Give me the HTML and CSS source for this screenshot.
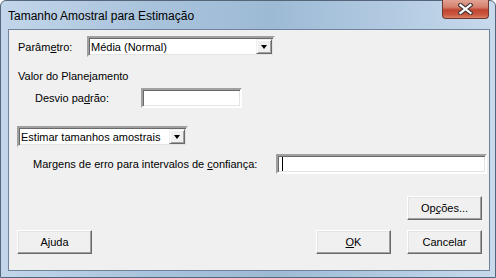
FILE: index.html
```html
<!DOCTYPE html>
<html lang="pt">
<head>
  <meta charset="UTF-8">
  <title>Tamanho Amostral para Estimação</title>
  <link rel="stylesheet" href="styles.css">
</head>
<body>
  <div class="window">
    <div class="titlebar">
      <span class="title">Tamanho Amostral para Estimação</span>
      <button class="close-btn">
        <svg width="15" height="12" viewBox="0 0 15 12">
          <path d="M2.5 2 L12.5 10 M12.5 2 L2.5 10" stroke="#4a3a3a" stroke-width="4.5" stroke-linecap="square"/>
          <path d="M2.5 2 L12.5 10 M12.5 2 L2.5 10" stroke="#ffffff" stroke-width="2.2" stroke-linecap="square"/>
        </svg>
      </button>
    </div>
    <div class="client">
      <div class="row row-param">
        <span class="label label-param">Parâm<u>e</u>tro:</span>
        <div class="combo combo-param">
          <span class="combo-text">Média (Normal)</span>
          <span class="combo-arrow"></span>
        </div>
      </div>
      <div class="row row-valor">
        <span class="label">Valor do Planejamento</span>
      </div>
      <div class="row row-desvio">
        <span class="label label-desvio">Desvio pa<u>d</u>rão:</span>
        <div class="textbox textbox-desvio"></div>
      </div>
      <div class="row row-estimar">
        <div class="combo combo-estimar">
          <span class="combo-text">Estimar tamanhos amostrais</span>
          <span class="combo-arrow"></span>
        </div>
      </div>
      <div class="row row-margens">
        <span class="label label-margens">Margens de erro para intervalos de <u>c</u>onfiança:</span>
        <div class="textbox textbox-margens"><span class="caret"></span></div>
      </div>
      <div class="row row-opcoes">
        <button class="btn">Op<u>ç</u>ões...</button>
      </div>
      <div class="row row-actions">
        <button class="btn">Ajuda</button>
        <button class="btn btn-ok"><u>O</u>K</button>
        <button class="btn">Cancelar</button>
      </div>
    </div>
  </div>
</body>
</html>
```

FILE: styles.css
```css
body {
  margin: 0;
  padding: 0;
  background-color: #ffffff;
  font-family: 'Liberation Sans', Arial, sans-serif;
}
.window {
  width: 496px;
  height: 278px;
  box-sizing: border-box;
  padding: 0 5px 6px 7px;
  border: 1px solid #55667a;
  border-radius: 6px 6px 0 0;
  background: linear-gradient(to right, #c2d6ea 0%, #a9c3dc 30%, #9dbad5 55%, #b3cbe2 80%, #c8daec 100%);
  display: flex;
  flex-direction: column;
}
.titlebar {
  height: 28px;
  display: flex;
  align-items: flex-start;
}
.title {
  font-size: 12px;
  color: #000000;
  margin-top: 8px;
}
.close-btn {
  margin-left: auto;
  margin-top: -1px;
  margin-right: 1px;
  width: 47px;
  height: 19px;
  border: 1px solid #6b3a32;
  border-top: none;
  border-radius: 0 0 4px 4px;
  background: linear-gradient(to bottom, #e2a293 0%, #d4806e 40%, #c0452f 55%, #c9573f 80%, #dc7f63 100%);
  display: flex;
  align-items: center;
  justify-content: center;
  padding: 0;
}
.client {
  flex: 1;
  border: 1px solid #6f849a;
  background-color: #f0f0f0;
  padding-top: 6px;
  display: flex;
  flex-direction: column;
  font-size: 11px;
  color: #000000;
}
.row {
  display: flex;
  align-items: center;
}
.label {
  white-space: nowrap;
}
.row-param {
  height: 21px;
  padding-left: 9px;
}
.label-param {
  width: 69px;
}
.row-valor {
  height: 14px;
  margin-top: 12px;
  padding-left: 9px;
}
.row-desvio {
  height: 20px;
  margin-top: 5px;
  padding-left: 26px;
}
.label-desvio {
  width: 106px;
}
.row-estimar {
  height: 21px;
  margin-top: 18px;
  padding-left: 8px;
}
.row-margens {
  height: 20px;
  margin-top: 7px;
  padding-left: 24px;
}
.label-margens {
  width: 243px;
}
.row-opcoes {
  height: 24px;
  margin-top: 22px;
  justify-content: flex-end;
  padding-right: 7px;
}
.row-actions {
  height: 24px;
  margin-top: 10px;
  padding-left: 8px;
  padding-right: 7px;
}
.combo {
  box-sizing: border-box;
  height: 21px;
  background-color: #ffffff;
  border: 2px solid;
  border-color: #a0a0a0 #f0f0f0 #f0f0f0 #a0a0a0;
  box-shadow: inset 1px 1px 0 #696969, inset -1px -1px 0 #e3e3e3;
  display: flex;
  align-items: center;
  padding: 0 1px 0 2px;
}
.combo-param {
  width: 188px;
}
.combo-estimar {
  width: 171px;
}
.combo-text {
  flex: 1;
  white-space: nowrap;
}
.combo-arrow {
  box-sizing: border-box;
  width: 16px;
  height: 15px;
  background-color: #f0f0f0;
  border: 1px solid;
  border-color: #f0f0f0 #696969 #696969 #f0f0f0;
  box-shadow: inset 1px 1px 0 #ffffff, inset -1px -1px 0 #a0a0a0;
  display: flex;
  align-items: center;
  justify-content: center;
}
.combo-arrow::after {
  content: '';
  width: 0;
  height: 0;
  border-left: 3.5px solid transparent;
  border-right: 3.5px solid transparent;
  border-top: 4px solid #000000;
  margin-top: 1px;
}
.textbox {
  box-sizing: border-box;
  height: 20px;
  background-color: #ffffff;
  border: 2px solid;
  border-color: #a0a0a0 #ffffff #ffffff #a0a0a0;
  box-shadow: inset 1px 1px 0 #696969, inset -1px -1px 0 #e3e3e3;
  display: flex;
  align-items: center;
}
.textbox-desvio {
  width: 101px;
}
.textbox-margens {
  width: 211px;
}
.caret {
  width: 1px;
  height: 14px;
  margin-left: 4px;
  background-color: #000000;
}
.btn {
  box-sizing: border-box;
  width: 75px;
  height: 24px;
  font-family: inherit;
  font-size: 11px;
  color: #000000;
  background-color: #f0f0f0;
  border: 1px solid;
  border-color: #ffffff #696969 #696969 #ffffff;
  box-shadow: inset -1px -1px 0 #a0a0a0, inset 1px 1px 0 #e3e3e3;
  padding: 0;
}
.btn-ok {
  margin-left: auto;
  margin-right: 16px;
}
```
